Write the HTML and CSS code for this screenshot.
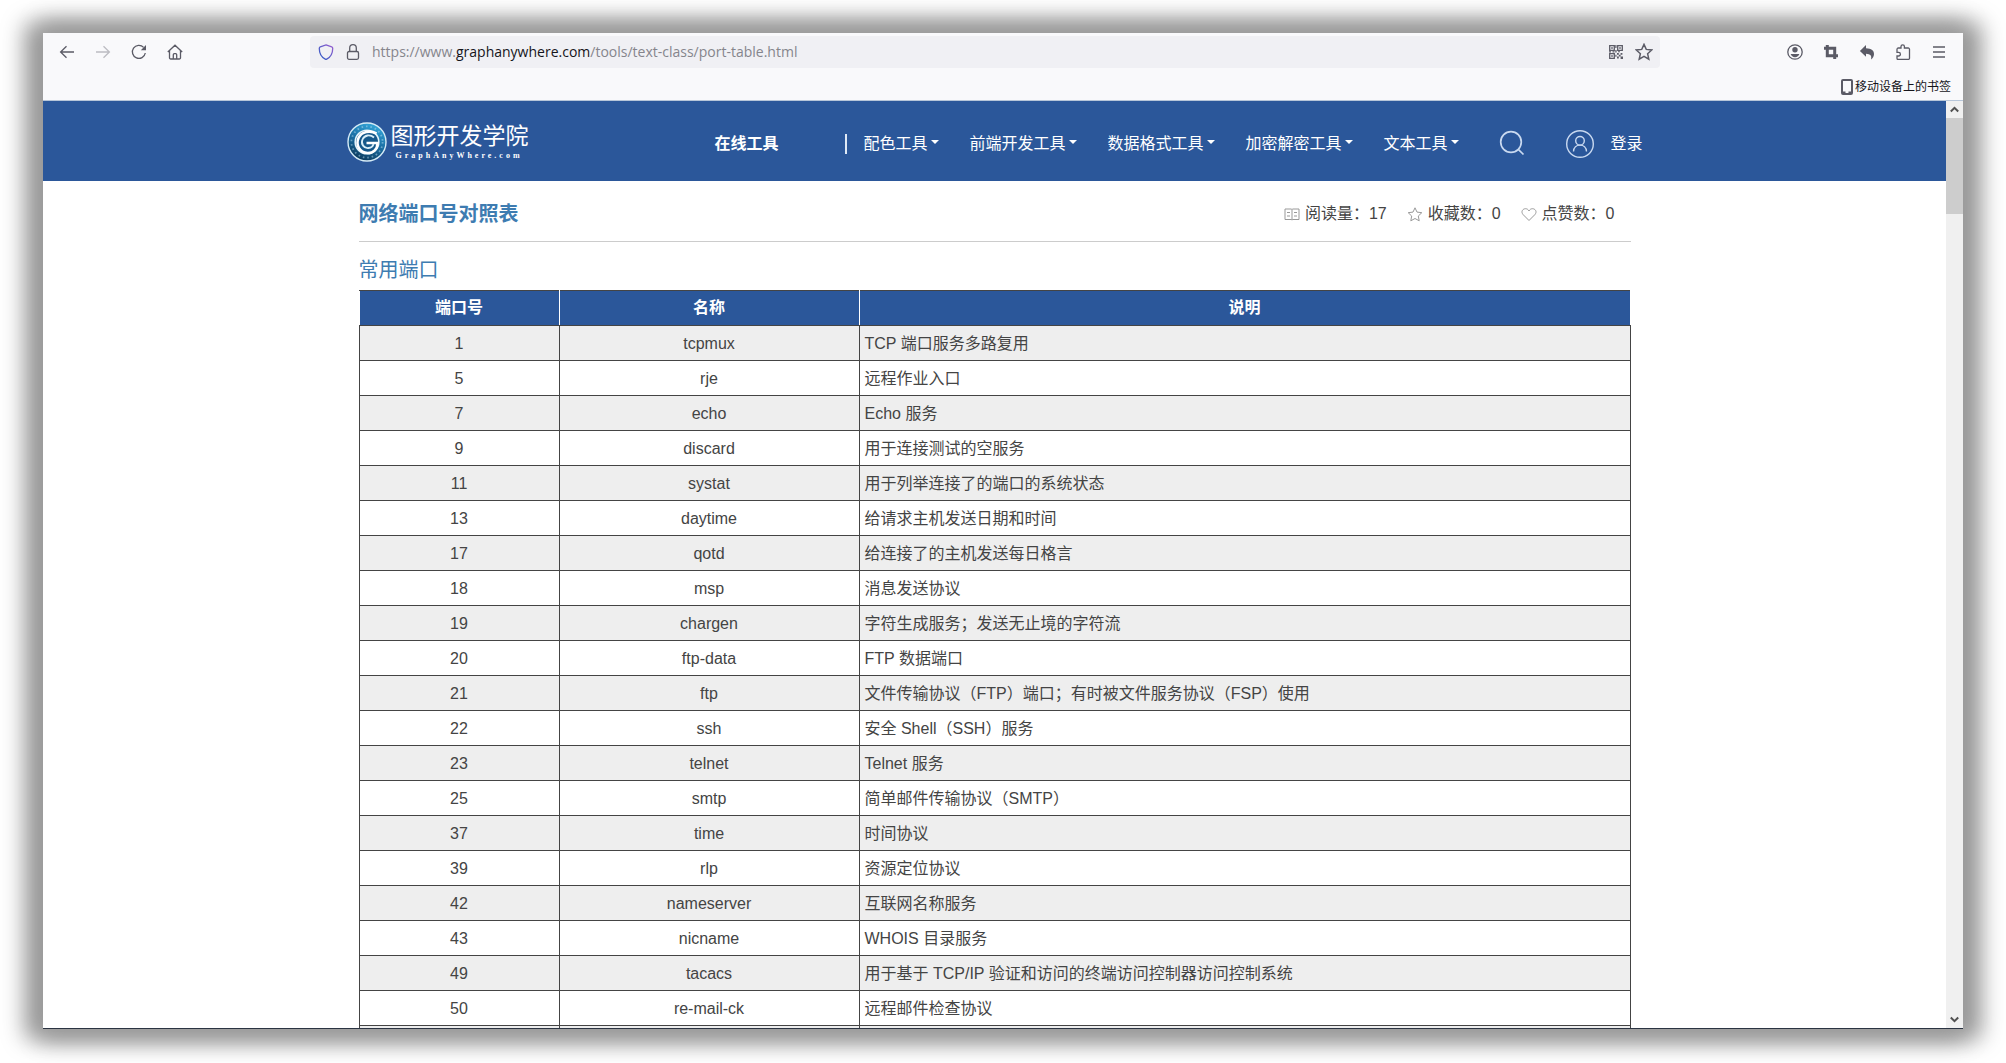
FILE: index.html
```html
<!DOCTYPE html>
<html lang="zh-CN">
<head>
<meta charset="utf-8">
<meta name="viewport" content="width=device-width, initial-scale=1">
<title>网络端口号对照表</title>
<link rel="stylesheet" href="styles.css">
</head>
<body>
<div class="window">
  <div class="toolbar">
    <div class="tool-group">
      <button class="tool" type="button" aria-label="后退"><svg width="16" height="16" viewBox="0 0 16 16"><path d="M15 8H1.5M7.5 2.2L1.6 8l5.9 5.8"/></svg></button>
      <button class="tool tool-off" type="button" aria-label="前进"><svg width="16" height="16" viewBox="0 0 16 16"><path d="M1 8h13.5M8.500 2.200L14.400 8l-5.900 5.800"/></svg></button>
      <button class="tool" type="button" aria-label="刷新"><svg width="16" height="16" viewBox="0 0 16 16"><path d="M14.300 9A6.500 6.500 0 1 1 12.600 3.400"/><path class="solid" d="M15 1v5.200H9.800z"/></svg></button>
      <button class="tool" type="button" aria-label="主页"><svg width="16" height="16" viewBox="0 0 16 16"><path d="M.8 8L8 1.200 15.200 8M2.500 6.800v7a1.200 1.200 0 0 0 1.200 1.200h8.600a1.200 1.200 0 0 0 1.200-1.200v-7M6.300 15v-4.300a1 1 0 0 1 1-1h1.400a1 1 0 0 1 1 1V15"/></svg></button>
    </div>
    <div class="address">
      <svg class="address-icon" width="16" height="16" viewBox="0 0 16 16" aria-hidden="true"><defs><linearGradient id="shield" x1="0" y1="1" x2="1" y2="0"><stop offset="0" stop-color="#2a5cc4"/><stop offset="1" stop-color="#9a5fd0"/></linearGradient></defs><path style="stroke:url(#shield)" d="M8 .9l5.700 2a1.500 1.500 0 0 1 1 1.500c0 4.600-2 8.600-6 10.700a1.500 1.500 0 0 1-1.400 0c-4-2.100-6-6.100-6-10.700a1.500 1.500 0 0 1 1-1.500z"/></svg>
      <svg class="address-icon" width="16" height="16" viewBox="0 0 16 16" aria-hidden="true"><rect x="2.500" y="7.500" width="11" height="7.800" rx="1.500"/><path d="M4.700 7.500V4a3.300 3.300 0 0 1 6.600 0v3.500"/></svg>
      <div class="url" role="textbox" aria-label="网址" contenteditable="true" spellcheck="false">https://www.<span class="url-host">graphanywhere.com</span>/tools/text-class/port-table.html</div>
      <button class="mini" type="button" aria-label="二维码"><svg width="16" height="16" viewBox="0 0 16 16"><path d="M1.700 1.700h4.600v4.600H1.700zM9.700 1.700h4.600v4.600H9.700zM1.700 9.700h4.600v4.600H1.700z"/><path class="solid" d="M3.200 3.200h1.600v1.600H3.200zM11.200 3.200h1.600v1.600h-1.600zM3.200 11.200h1.600v1.600H3.200zM7.300 1h1.200v3H7.300zM1 7.300h2v1.300H1zM4.500 7.300h2v1.300h-2zM9 9h1.800v1.800H9zM12.600 9h1.800v1.800h-1.800zM10.800 10.800h1.800v1.800h-1.800zM9 12.600h1.800v1.800H9zM12.600 12.600h2.400V15h-2.400zM7.300 6h1.300v2.500H7.300zM10 7.200h2v1h-2zM7.300 10.800h1.200v2H7.300z"/></svg></button>
      <button class="mini" type="button" aria-label="收藏此页"><svg width="18" height="18" viewBox="0 0 16 16"><path d="M8 1.200l2 4.500 4.900.5-3.700 3.300 1.100 4.900L8 11.900l-4.300 2.500 1.100-4.900L1.100 6.200 6 5.700z"/></svg></button>
    </div>
    <div class="tool-group">
      <button class="tool" type="button" aria-label="账户"><svg width="16" height="16" viewBox="0 0 16 16"><circle cx="8" cy="8" r="7.200"/><circle class="solid" cx="8" cy="5.800" r="2.700"/><path class="solid" d="M3.600 10h8.800c-.6 2-2.300 3.200-4.400 3.200S4.200 12 3.600 10z"/></svg></button>
      <button class="tool" type="button" aria-label="截图"><svg class="thick" width="16" height="16" viewBox="0 0 16 16"><path d="M4.300 1v10.700H15M1 4.300h10.700V15"/></svg></button>
      <button class="tool" type="button" aria-label="撤销"><svg width="16" height="16" viewBox="0 0 16 16"><path class="solid" d="M7 1v3.200c5.500.2 8.200 2.400 8 6-.1 2.200-1.200 3.900-3 5.300.9-3.700-.4-5.700-5-5.800v3.100L.9 6.900z"/></svg></button>
      <button class="tool" type="button" aria-label="扩展"><svg width="16" height="16" viewBox="0 0 16 16"><path d="M2 7V5.300A1.300 1.300 0 0 1 3.300 4H6V2.500a1.700 1.700 0 0 1 3.400 0V4h3.800a1.300 1.300 0 0 1 1.300 1.300v8.900a1.300 1.300 0 0 1-1.300 1.300H3.300A1.300 1.300 0 0 1 2 14.200V12h1.600a1.800 1.800 0 0 0 0-3.600H2z"/></svg></button>
      <button class="tool" type="button" aria-label="菜单"><svg width="16" height="16" viewBox="0 0 16 16"><path d="M2 3h12M2 8h12M2 13h12"/></svg></button>
    </div>
  </div>
  <div class="bookmarks">
    <a class="bookmark" href="#"><svg width="12" height="16" viewBox="0 0 12 16" aria-hidden="true"><rect x="1" y="1" width="10" height="14" rx="1"/><path d="M1 13.500h3.500M7.500 13.500H11"/></svg>移动设备上的书签</a>
  </div>
  <div class="viewport">
    <div class="page">
      <header class="site-header">
        <div class="header-inner">
          <a class="brand" href="#">
            <svg width="40" height="40" viewBox="0 0 40 40" aria-hidden="true">
              <defs><linearGradient id="badge" x1=".7" y1="0" x2=".3" y2="1"><stop offset="0" stop-color="#35a9dc"/><stop offset=".5" stop-color="#1a6da2"/><stop offset="1" stop-color="#0d3858"/></linearGradient></defs>
              <circle cx="20" cy="20" r="19" fill="url(#badge)" stroke="#d5ebf6" stroke-width="1.400"/>
              <circle cx="20" cy="20" r="15.600" fill="none" stroke="#b5dcef" stroke-width="1.800" stroke-dasharray="1.600 2.900" opacity=".5"/>
              <circle cx="20" cy="20" r="11.800" fill="#15588a" stroke="#e4f4fb" stroke-width="1.600"/>
              <path d="M29.500 11.500C23 8 14.500 9.500 11.500 16c-3 7 1 14.500 9 15 6 .2 10-4 10-10H19.500" fill="none" stroke="#fff" stroke-width="2.600"/>
              <path d="M27 15.500c-4-3.500-9.500-2.500-11.500 2s1.500 9 6 8.500c3-.2 4.500-2 5-4" fill="none" stroke="#d8eef8" stroke-width="1.800"/>
            </svg>
            <span class="brand-text"><span class="brand-name">图形开发学院</span><span class="brand-site">GraphAnyWhere.com</span></span>
          </a>
          <nav class="nav" aria-label="主导航">
            <a class="nav-current" href="#">在线工具</a>
            <span class="nav-rule"></span>
            <a class="nav-item" href="#">配色工具<i class="caret"></i></a>
            <a class="nav-item" href="#">前端开发工具<i class="caret"></i></a>
            <a class="nav-item" href="#">数据格式工具<i class="caret"></i></a>
            <a class="nav-item" href="#">加密解密工具<i class="caret"></i></a>
            <a class="nav-item" href="#">文本工具<i class="caret"></i></a>
          </nav>
          <button class="search" type="button" aria-label="搜索"><svg width="26" height="26" viewBox="0 0 26 26"><circle cx="12" cy="12" r="10.300"/><path d="M19.300 19.300l5.200 5.200"/></svg></button>
          <a class="login" href="#"><svg width="28" height="28" viewBox="0 0 28 28" aria-hidden="true"><circle cx="14" cy="14" r="13.300"/><circle cx="14" cy="10.800" r="4.300"/><path d="M7.500 21.500c.2-3.800 3-6.400 6.500-6.400s6.300 2.600 6.500 6.400"/></svg>登录</a>
        </div>
      </header>
      <main class="content">
        <div class="title-bar">
          <h1 class="title">网络端口号对照表</h1>
          <ul class="stats">
            <li class="stat"><svg width="16" height="16" viewBox="0 0 16 16" aria-hidden="true"><path d="M1 3h6.200l.8.600.8-.6H15v10.500H8.800l-.8.500-.8-.5H1zM8 3.600V14M3 6.500h3M3 10h3M10 6.500h3M10 10h3"/></svg>阅读量：17</li>
            <li class="stat"><svg width="16" height="16" viewBox="0 0 16 16" aria-hidden="true"><path d="M8 1.800l2 4.300 4.800.6-3.500 3.300.9 4.800L8 12.500l-4.200 2.300.9-4.800L1.200 6.700 6 6.100z"/></svg>收藏数：0</li>
            <li class="stat"><svg width="16" height="16" viewBox="0 0 16 16" aria-hidden="true"><path d="M8 14.500L2.200 8.700C-.6 5.500 2 2.700 4.500 2.700 6 2.700 7.300 3.500 8 5c.7-1.500 2-2.300 3.500-2.300 2.500 0 5.100 2.800 2.300 6z"/></svg>点赞数：0</li>
          </ul>
        </div>
        <h2 class="section-title">常用端口</h2>
        <table class="ports">
          <colgroup><col class="col-port"><col class="col-name"><col></colgroup>
          <thead><tr><th scope="col">端口号</th><th scope="col">名称</th><th scope="col">说明</th></tr></thead>
          <tbody>
            <tr><td>1</td><td>tcpmux</td><td>TCP 端口服务多路复用</td></tr>
            <tr><td>5</td><td>rje</td><td>远程作业入口</td></tr>
            <tr><td>7</td><td>echo</td><td>Echo 服务</td></tr>
            <tr><td>9</td><td>discard</td><td>用于连接测试的空服务</td></tr>
            <tr><td>11</td><td>systat</td><td>用于列举连接了的端口的系统状态</td></tr>
            <tr><td>13</td><td>daytime</td><td>给请求主机发送日期和时间</td></tr>
            <tr><td>17</td><td>qotd</td><td>给连接了的主机发送每日格言</td></tr>
            <tr><td>18</td><td>msp</td><td>消息发送协议</td></tr>
            <tr><td>19</td><td>chargen</td><td>字符生成服务；发送无止境的字符流</td></tr>
            <tr><td>20</td><td>ftp-data</td><td>FTP 数据端口</td></tr>
            <tr><td>21</td><td>ftp</td><td>文件传输协议（FTP）端口；有时被文件服务协议（FSP）使用</td></tr>
            <tr><td>22</td><td>ssh</td><td>安全 Shell（SSH）服务</td></tr>
            <tr><td>23</td><td>telnet</td><td>Telnet 服务</td></tr>
            <tr><td>25</td><td>smtp</td><td>简单邮件传输协议（SMTP）</td></tr>
            <tr><td>37</td><td>time</td><td>时间协议</td></tr>
            <tr><td>39</td><td>rlp</td><td>资源定位协议</td></tr>
            <tr><td>42</td><td>nameserver</td><td>互联网名称服务</td></tr>
            <tr><td>43</td><td>nicname</td><td>WHOIS 目录服务</td></tr>
            <tr><td>49</td><td>tacacs</td><td>用于基于 TCP/IP 验证和访问的终端访问控制器访问控制系统</td></tr>
            <tr><td>50</td><td>re-mail-ck</td><td>远程邮件检查协议</td></tr>
            <tr><td></td><td></td><td></td></tr>
          </tbody>
        </table>
      </main>
    </div>
    <div class="scrollbar">
      <button class="scroll-button" type="button" aria-label="向上滚动"><svg width="9" height="7" viewBox="0 0 9 7"><path d="M.8 5.500l3.700-3.700 3.700 3.700"/></svg></button>
      <div class="scroll-track"><div class="scroll-thumb"></div></div>
      <button class="scroll-button" type="button" aria-label="向下滚动"><svg width="9" height="7" viewBox="0 0 9 7"><path d="M.8 1.500l3.700 3.700 3.700-3.700"/></svg></button>
    </div>
  </div>
</div>
</body>
</html>
```
FILE: styles.css
```css
* {
  box-sizing: border-box;
}

body {
  margin: 0;
  height: 100vh;
  padding: 33px 43px 34px;
  background: #fff;
  color: #444;
  font: 16px/24px "Liberation Sans", "Noto Sans CJK SC", sans-serif;
  overflow: hidden;
}

a {
  color: inherit;
  text-decoration: none;
}

button {
  padding: 0;
  border: 0;
  background: none;
  color: inherit;
  font: inherit;
}

svg {
  display: block;
  flex: none;
  fill: none;
  stroke: currentColor;
}

/* Browser window */
.window {
  display: flex;
  flex-direction: column;
  height: 100%;
  border-bottom: 1px solid #2b3442;
  background: #fff;
  box-shadow: -8px 0 22px 10px #9a9a9a, 8px 0 22px 10px #9a9a9a;
}

.toolbar {
  display: flex;
  align-items: center;
  gap: 117px;
  height: 38px;
  padding: 0 6px;
  background: #f9f9fb;
  color: #5b5b66;
}

.toolbar svg {
  stroke-width: 1.3;
}

.toolbar .solid {
  fill: currentColor;
  stroke: none;
}

.toolbar .thick {
  stroke-width: 3;
}

.tool-group {
  display: flex;
}

.tool {
  display: grid;
  place-items: center;
  width: 36px;
  height: 32px;
}

.tool-off {
  color: #bcbcc2;
}

.address {
  display: flex;
  flex: 1;
  align-items: center;
  min-width: 0;
  height: 32px;
  padding: 0 2px 0 8px;
  border-radius: 4px;
  background: #f0f0f4;
}

.address-icon {
  margin-right: 11px;
}

.url {
  flex: 1;
  min-width: 0;
  overflow: hidden;
  color: #85858c;
  font: 14px/24px "Open Sans", "Noto Sans", sans-serif;
  white-space: nowrap;
}

.url-host {
  color: #15141a;
}

.mini {
  display: grid;
  place-items: center;
  width: 28px;
  height: 28px;
}

.bookmarks {
  display: flex;
  justify-content: flex-end;
  height: 30px;
  padding: 4px 12px 0;
  border-bottom: 1px solid #b7c6d9;
  background: #f9f9fb;
}

.bookmark {
  display: flex;
  align-items: center;
  gap: 2px;
  height: 24px;
  color: #15141a;
  font-size: 12px;
}

.bookmark svg {
  stroke: #5b5b66;
  stroke-width: 2;
}

.viewport {
  display: flex;
  flex: 1;
  min-height: 0;
}

.page {
  flex: 1;
  min-width: 0;
  overflow: hidden;
}

/* Site header */
.site-header {
  background: #2b579a;
  color: #fff;
}

.header-inner {
  display: flex;
  align-items: center;
  max-width: 1296px;
  height: 80px;
  margin: 0 auto;
}

.brand {
  display: flex;
  align-items: center;
  gap: 4px;
  padding-top: 2px;
}

.brand svg {
  stroke: none;
}

.brand-text {
  display: flex;
  flex-direction: column;
}

.brand-name {
  font-size: 23px;
  line-height: 28px;
}

.brand-site {
  padding-left: 5px;
  font: bold 8px/12px "Liberation Serif", serif;
  letter-spacing: 3px;
}

.nav {
  display: flex;
  align-items: center;
  gap: 30px;
  margin-left: auto;
  padding-top: 6px;
}

.nav-current {
  margin-right: 37px;
  font-weight: bold;
}

.nav-rule {
  width: 2px;
  height: 20px;
  margin-right: -14px;
  background: #dfe9f6;
}

.nav-item {
  display: flex;
  align-items: center;
  gap: 4px;
}

.caret {
  border: 4px solid transparent;
  border-top-color: currentColor;
  border-bottom: 0;
  margin-bottom: 4px;
}

.search {
  margin: 4px 41px 0 40px;
  color: #c9d9f0;
}

.search svg {
  stroke-width: 1.7;
}

.login {
  display: flex;
  align-items: center;
  gap: 16px;
  padding-top: 5px;
}

.login svg {
  color: #c9d9f0;
  stroke-width: 1.4;
}

/* Content */
.content {
  max-width: 1272px;
  margin: 0 auto;
}

.title-bar {
  display: flex;
  align-items: center;
  justify-content: space-between;
  height: 61px;
  padding: 6px 16px 0 0;
  border-bottom: 1px solid #ccc;
}

.title,
.section-title {
  margin: 0;
  color: #3e7cb1;
  font-size: 20px;
  line-height: 32px;
}

.section-title {
  padding: 12px 0 4px;
  font-weight: normal;
}

.stats {
  display: flex;
  gap: 20px;
  margin: 0;
  padding: 0;
  list-style: none;
}

.stat {
  display: flex;
  align-items: center;
  gap: 5px;
}

.stat svg {
  color: #999;
}

.ports {
  width: 100%;
  border-collapse: collapse;
  table-layout: fixed;
}

.col-port {
  width: 200px;
}

.col-name {
  width: 300px;
}

.ports th,
.ports td {
  height: 35px;
  padding: 0 5px;
  border: 1px solid #444;
  text-align: center;
}

.ports th {
  border-right-color: #fff;
  border-left-color: #fff;
  background: #2b579a;
  color: #fff;
}

.ports td {
  padding-top: 2px;
}

.ports td:last-child {
  text-align: left;
}

.ports tbody tr:nth-child(odd) {
  background: #eee;
}

/* Page scrollbar */
.scrollbar {
  display: flex;
  flex-direction: column;
  width: 17px;
  background: #f0f0f0;
}

.scroll-button {
  display: grid;
  place-items: center;
  height: 17px;
  color: #505050;
}

.scroll-button svg {
  stroke-width: 2;
}

.scroll-track {
  flex: 1;
}

.scroll-thumb {
  height: 96px;
  background: #cdcdcd;
}
```
